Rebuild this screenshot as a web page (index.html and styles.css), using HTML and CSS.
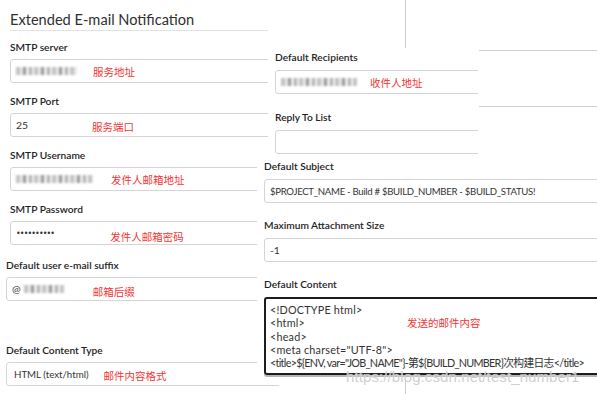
FILE: index.html
```html
<!DOCTYPE html>
<html lang="zh">
<head>
<meta charset="utf-8">
<title>Extended E-mail Notification</title>
<link rel="stylesheet" href="styles.css">
</head>
<body>
<div class="canvas">
  <div class="bg-vline"></div>
  <div class="bg-hline bg-hline-1"></div>
  <div class="bg-hline bg-hline-2"></div>

  <section class="left">
    <div class="sec-top">
      <h2 class="title">Extended E-mail Notification</h2>
      <div class="field">
        <div class="label">SMTP server</div>
        <div class="input"><span class="blur w61"></span><span class="note n-server">服务地址</span></div>
      </div>
      <div class="field">
        <div class="label">SMTP Port</div>
        <div class="input"><span class="val">25</span><span class="note n-port">服务端口</span></div>
      </div>
      <div class="field">
        <div class="label">SMTP Username</div>
        <div class="input"><span class="blur w77"></span><span class="note n-user">发件人邮箱地址</span></div>
      </div>
      <div class="field">
        <div class="label">SMTP Password</div>
        <div class="input"><span class="dots">••••••••••</span><span class="note n-pass">发件人邮箱密码</span></div>
      </div>
    </div>
    <div class="sec-bottom">
      <div class="field">
        <div class="label">Default user e-mail suffix</div>
        <div class="input"><span class="val">@</span><span class="blur w40"></span><span class="note n-suffix">邮箱后缀</span></div>
      </div>
      <div class="field field-type">
        <div class="label">Default Content Type</div>
        <div class="input"><span class="val val-type">HTML (text/html)</span><span class="note n-type">邮件内容格式</span></div>
      </div>
    </div>
  </section>

  <section class="piece piece-a">
    <div class="field">
      <div class="label">Default Recipients</div>
      <div class="input"><span class="blur w76"></span><span class="note n-rcpt">收件人地址</span></div>
    </div>
    <div class="field">
      <div class="label">Reply To List</div>
      <div class="input"></div>
    </div>
  </section>

  <section class="piece piece-b">
    <div class="field">
      <div class="label">Default Subject</div>
      <div class="input"><span class="val val-subject">$PROJECT_NAME - Build # $BUILD_NUMBER - $BUILD_STATUS!</span></div>
    </div>
    <div class="field">
      <div class="label">Maximum Attachment Size</div>
      <div class="input"><span class="val">-1</span></div>
    </div>
    <div class="field">
      <div class="label">Default Content</div>
      <div class="textarea">
        <div>&lt;!DOCTYPE html&gt;</div>
        <div>&lt;html&gt;</div>
        <div>&lt;head&gt;</div>
        <div>&lt;meta charset="UTF-8"&gt;</div>
        <div class="tline">&lt;title&gt;${ENV, var="JOB_NAME"}-第${BUILD_NUMBER}次构建日志&lt;/title&gt;</div>
        <span class="note n-content">发送的邮件内容</span>
      </div>
    </div>
  </section>

  <div class="watermark">https://blog.csdn.net/test_number1</div>
</div>
</body>
</html>
```
FILE: styles.css
```css
html, body {
  margin: 0;
  padding: 0;
  background: #fff;
}
body {
  font-family: "Lato", "Noto Sans CJK SC", sans-serif;
  color: #333;
}
.canvas {
  position: relative;
  width: 597px;
  height: 394px;
  overflow: hidden;
}
.bg-vline {
  position: absolute;
  left: 405px;
  top: 0;
  width: 1px;
  height: 394px;
  background: #cfcfcf;
}
.bg-hline {
  position: absolute;
  left: 479px;
  width: 118px;
  height: 1px;
  background: #d0d0d0;
}
.bg-hline-1 { top: 50px; }
.bg-hline-2 { top: 106px; }

.left {
  position: relative;
  width: 279px;
  overflow: hidden;
}
.sec-top {
  padding-left: 10px;
}
.title {
  margin: 0;
  padding-top: 10px;
  width: 258px;
  font-size: 14.6px;
  line-height: 20px;
  font-weight: 400;
  color: #2f2f2f;
  border-bottom: 1px solid #e2e2e2;
}
.field {
  display: flex;
  flex-direction: column;
}
.label {
  font-size: 10.2px;
  line-height: 16px;
  font-weight: 600;
  color: #222;
  margin-bottom: 4px;
  white-space: nowrap;
}
.sec-top .field { margin-top: 8px; }
.sec-top .field + .field { margin-top: 10px; }

.input {
  box-sizing: border-box;
  height: 24px;
  width: 340px;
  border: 1px solid #d4d4d4;
  border-radius: 3px;
  display: flex;
  align-items: center;
  padding-left: 5px;
  font-size: 10.4px;
  color: #333;
}
.val { white-space: nowrap; }
.val-subject { font-size: 9.6px; letter-spacing: -0.3px; }

.sec-bottom {
  padding-left: 6px;
  margin-top: 12px;
}
.field-type { margin-top: 41px; }
.val-type { margin-left: 2px; font-size: 9.7px; }

.blur {
  display: inline-block;
  height: 8px;
  filter: blur(0.9px);
  background: repeating-linear-gradient(90deg, #c4c4c4 0 4px, #e8e8e8 4px 7px, #9a9a9a 7px 10px, #eeeeee 10px 13px, #b3b3b3 13px 16px, #f4f4f4 16px 18px);
}
.w61 { width: 61px; }
.w77 { width: 77px; }
.w40 { width: 40px; margin-left: 3px; }
.w76 { width: 76px; }
.dots {
  font-size: 8px;
  letter-spacing: -0.9px;
  font-family: "DejaVu Sans", sans-serif;
}
.note {
  font-family: "Noto Sans CJK SC", sans-serif;
  font-size: 10.5px;
  color: #f23535;
  white-space: nowrap;
}
.n-server { margin-left: 16px; }
.n-port { margin-left: 64px; margin-top: 2px; }
.n-user { margin-left: 18px; }
.n-pass { margin-left: 56px; margin-top: 6px; }
.n-suffix { margin-left: 29px; margin-top: 4px; }
.n-type { margin-left: 15px; margin-top: 2px; }
.n-rcpt { margin-left: 13px; }

.piece {
  position: absolute;
  background: #fff;
  overflow: hidden;
  padding-left: 7px;
  box-sizing: border-box;
}
.piece-a {
  left: 268px;
  top: 48px;
  width: 210px;
  height: 107px;
  padding-top: 1px;
}
.piece-a .label { margin-bottom: 5px; }
.piece-a .field + .field { margin-top: 15px; }
.piece-a .label + .input { width: 260px; }

.piece-b {
  left: 257px;
  top: 155px;
  width: 340px;
  height: 225px;
  padding-top: 3px;
}
.piece-b .label { margin-bottom: 5px; }
.piece-b .field + .field { margin-top: 14px; }
.piece-b .input { width: 360px; padding-left: 5px; }

.textarea {
  position: relative;
  box-sizing: border-box;
  width: 360px;
  height: 78px;
  border: 2px solid #1c1c1c;
  border-radius: 3px;
  padding: 4px 0 0 4px;
  font-size: 10.8px;
  line-height: 13.25px;
  letter-spacing: 0.2px;
  color: #333;
  white-space: nowrap;
  box-shadow: 0 2px 0 #b5b5b5;
}
.tline { letter-spacing: -0.7px; }
.n-content {
  position: absolute;
  left: 141px;
  top: 17px;
  letter-spacing: 0;
}
.watermark {
  position: absolute;
  left: 346px;
  top: 368px;
  font-family: "Liberation Sans", sans-serif;
  font-size: 15px;
  color: rgba(185, 185, 185, 0.7);
  text-shadow: 0 0 1px #fff;
  letter-spacing: 0.1px;
}
```
